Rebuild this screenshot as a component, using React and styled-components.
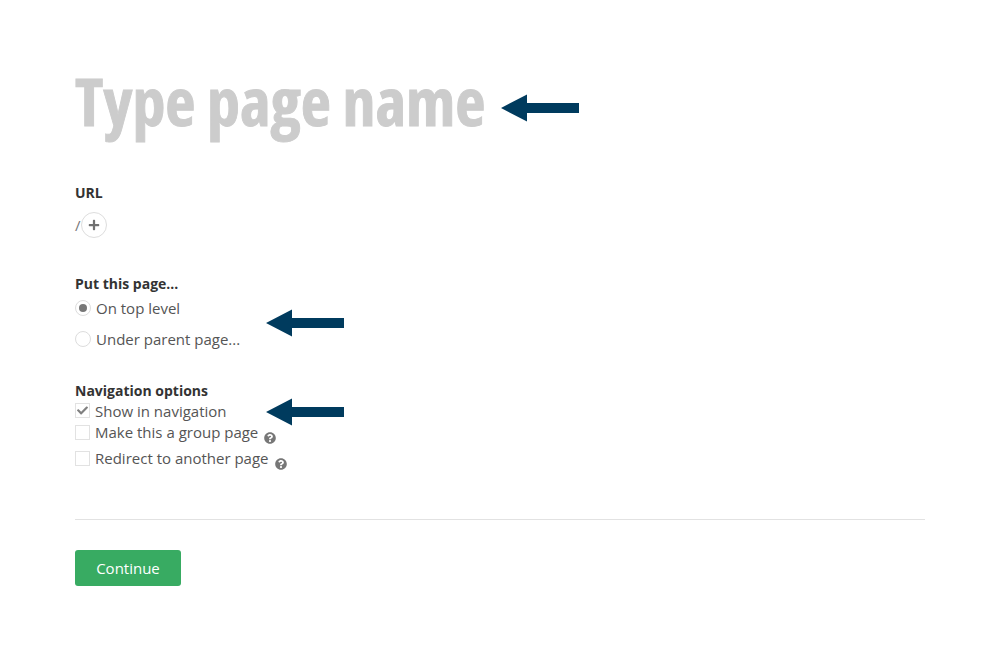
import React from 'react';
import styled, { createGlobalStyle } from 'styled-components';
import { FaCheck, FaPlus, FaQuestionCircle } from 'react-icons/fa';

const GlobalStyle = createGlobalStyle`
    html, body {
        margin: 0;
        background: #fff;
        font-family: "Open Sans", "Liberation Sans", sans-serif;
        color: #444;
    }
`;

const Page = styled.div`
    box-sizing: border-box;
    width: 1002px;
    height: 646px;
    padding: 67px 77px 0 75px;
    overflow: hidden;
`;

const TitleRow = styled.div`
    display: flex;
    align-items: flex-start;
    gap: 16px;
    height: 74px;
`;

const Title = styled.h1`
    margin: 0;
    font-size: 66px;
    line-height: 67px;
    font-weight: 700;
    font-stretch: 75%;
    letter-spacing: -0.1px;
    -webkit-text-stroke: 0.9px #ccc;
    color: #ccc;
    white-space: nowrap;
`;

const Section = styled.section`
    margin-top: ${(p) => p.$top}px;
`;

const Label = styled.div`
    font-size: 14px;
    line-height: 20px;
    font-weight: 700;
    color: #333;
`;

const UrlRow = styled.div`
    display: flex;
    align-items: center;
    height: 28px;
    margin-top: 8px;
    font-size: 15px;
    color: #777;
`;

const AddButton = styled.button`
    display: flex;
    align-items: center;
    justify-content: center;
    box-sizing: border-box;
    width: 26px;
    height: 26px;
    padding: 0;
    border: 1px solid #ddd;
    border-radius: 50%;
    background: #fff;
    color: #707070;
    font-size: 12px;
`;

const RadioBlock = styled.div`
    display: flex;
    align-items: center;
    justify-content: space-between;
    width: 269px;
    margin-top: 3px;
`;

const RadioList = styled.div`
    display: flex;
    flex-direction: column;
    gap: 9px;
`;

const OptionRow = styled.label`
    display: flex;
    align-items: center;
    gap: 5px;
    height: 22px;
    font-size: 15px;
    line-height: 22px;
    color: #555;
    white-space: nowrap;
`;

const Radio = styled.span`
    position: relative;
    box-sizing: border-box;
    width: 16px;
    height: 16px;
    border: 1px solid #ddd;
    border-radius: 50%;
    background: #fff;

    &::after {
        content: '';
        display: ${(p) => (p.$checked ? 'block' : 'none')};
        position: absolute;
        inset: 3px;
        border-radius: 50%;
        background: #777;
    }
`;

const CheckList = styled.div`
    display: flex;
    flex-direction: column;
    margin-top: -1px;
`;

const CheckRow = styled(OptionRow)`
    width: 269px;
    height: ${(p) => p.$height}px;
`;

const Box = styled.span`
    display: flex;
    align-items: center;
    justify-content: center;
    box-sizing: border-box;
    flex: none;
    width: 15px;
    height: 15px;
    border: 1px solid #e2e2e2;
    background: #fff;
    color: #808080;
    font-size: 11px;
`;

const Help = styled(FaQuestionCircle)`
    flex: none;
    margin: 11px 0 0 1px;
    color: #777;
    font-size: 12px;
`;

const Arrow = styled.svg`
    flex: none;
    display: block;
    margin-top: ${(p) => p.$top || 0}px;
    margin-left: ${(p) => (p.$push ? 'auto' : '0')};
`;

const Divider = styled.hr`
    height: 1px;
    margin: 46px 0 0;
    border: 0;
    background: #e2e2e2;
`;

const ContinueButton = styled.button`
    display: block;
    width: 106px;
    height: 36px;
    margin-top: 30px;
    padding: 0;
    border: 0;
    border-radius: 3px;
    background: #38ab62;
    color: #fff;
    font-family: inherit;
    font-size: 15px;
`;

const BackArrow = (props) => (
    <Arrow width="78" height="28" viewBox="0 0 78 28" {...props}>
        <path d="M0 14 L26 0.5 V9 H78 V19 H26 V27.5 Z" fill="#003b5e" />
    </Arrow>
);

const App = () => {
    return (
        <Page>
            <GlobalStyle />
            <TitleRow>
                <Title>Type page name</Title>
                <BackArrow $top={27} />
            </TitleRow>

            <Section $top={42}>
                <Label>URL</Label>
                <UrlRow>
                    /
                    <AddButton><FaPlus /></AddButton>
                </UrlRow>
            </Section>

            <Section $top={35}>
                <Label>Put this page...</Label>
                <RadioBlock>
                    <RadioList>
                        <OptionRow><Radio $checked />On top level</OptionRow>
                        <OptionRow><Radio />Under parent page...</OptionRow>
                    </RadioList>
                    <BackArrow $top={-2} />
                </RadioBlock>
            </Section>

            <Section $top={31}>
                <Label>Navigation options</Label>
                <CheckList>
                    <CheckRow $height={21}>
                        <Box><FaCheck /></Box>
                        Show in navigation
                        <BackArrow $push $top={2} />
                    </CheckRow>
                    <CheckRow $height={22}>
                        <Box />
                        Make this a group page
                        <Help />
                    </CheckRow>
                    <CheckRow $height={30}>
                        <Box />
                        Redirect to another page
                        <Help />
                    </CheckRow>
                </CheckList>
            </Section>

            <Divider />
            <ContinueButton>Continue</ContinueButton>
        </Page>
    );
};

export default App;
